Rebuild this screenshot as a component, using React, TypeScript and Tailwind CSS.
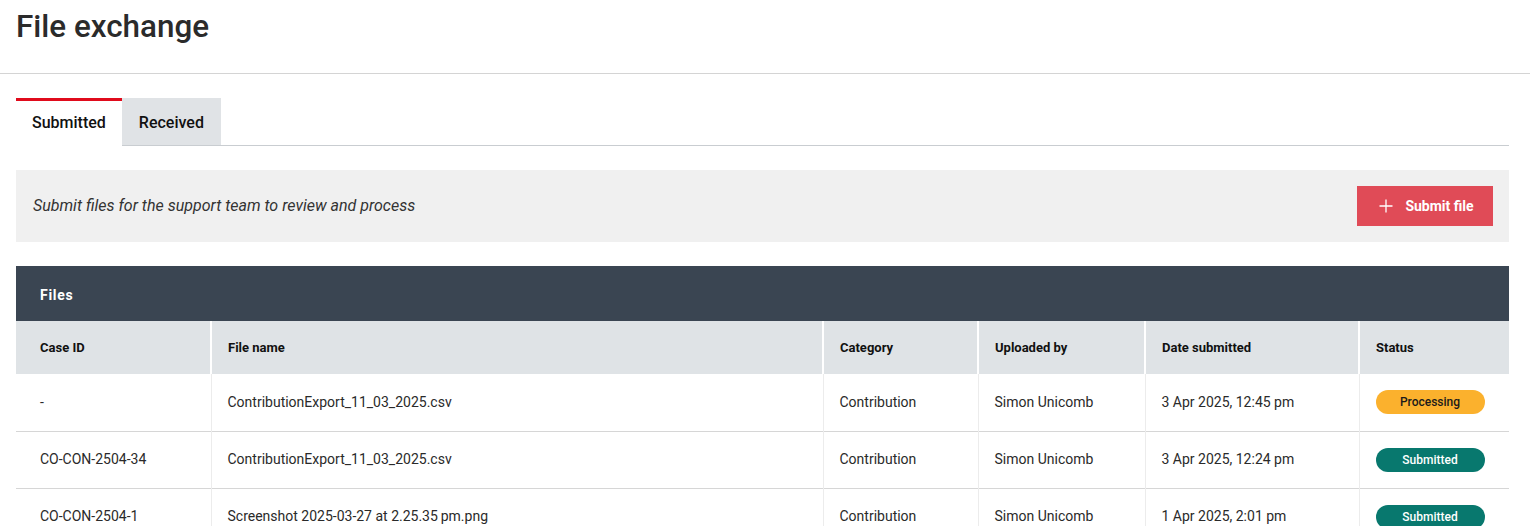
import React from "react";

type Row = {
  caseId: string;
  fileName: string;
  category: string;
  uploadedBy: string;
  date: string;
  status: "Processing" | "Submitted";
};

const ROWS: Row[] = [
  {
    caseId: "-",
    fileName: "ContributionExport_11_03_2025.csv",
    category: "Contribution",
    uploadedBy: "Simon Unicomb",
    date: "3 Apr 2025, 12:45 pm",
    status: "Processing",
  },
  {
    caseId: "CO-CON-2504-34",
    fileName: "ContributionExport_11_03_2025.csv",
    category: "Contribution",
    uploadedBy: "Simon Unicomb",
    date: "3 Apr 2025, 12:24 pm",
    status: "Submitted",
  },
  {
    caseId: "CO-CON-2504-1",
    fileName: "Screenshot 2025-03-27 at 2.25.35\u2009pm.png",
    category: "Contribution",
    uploadedBy: "Simon Unicomb",
    date: "1 Apr 2025, 2:01 pm",
    status: "Submitted",
  },
];

const COLUMNS = ["Case ID", "File name", "Category", "Uploaded by", "Date submitted", "Status"];

const StatusBadge = ({ status }: { status: Row["status"] }) =>
  status === "Processing" ? (
    <span className="inline-flex h-[24px] w-[109px] items-center justify-center rounded-full bg-[#fbb12d] text-[12px] font-medium text-[#1a1a1a]">
      Processing
    </span>
  ) : (
    <span className="inline-flex h-[24px] w-[109px] items-center justify-center rounded-full bg-[#08786e] text-[12px] font-medium text-white">
      Submitted
    </span>
  );

export default function App() {
  return (
    <div className="min-h-[526px] bg-white font-['Roboto',sans-serif] text-[#222]">
      <header className="h-[74px] border-b border-[#d4d4d4] px-4 pt-[7px]">
        <h1 className="text-[31.4px] font-medium leading-[40px] text-[#2b2b2b]">File exchange</h1>
      </header>

      <main className="pl-4 pr-[21px] pt-6">
        {/* tabs */}
        <div className="flex h-[48px] border-b border-[#c9cdd1]">
          <button className="h-[48px] border-t-[3px] border-[#e00b1c] bg-white px-4 pb-px text-[16px] font-medium text-[#111]">
            Submitted
          </button>
          <button className="h-[47px] bg-[#e0e3e6] px-[17px] pt-[2px] text-[16px] font-medium text-[#111]">
            Received
          </button>
        </div>

        <div className="mt-6 flex h-[72px] items-center justify-between bg-[#f0f0f0] pl-[17px] pr-4">
          <p className="text-[16px] italic text-[#333]">Submit files for the support team to review and process</p>
          <button className="flex h-[40px] w-[136px] items-center justify-center gap-[12px] bg-[#e04b57] pl-[3px] text-[14px] font-bold text-white">
            <svg width="14" height="14" viewBox="0 0 14 14" fill="none" stroke="currentColor" strokeWidth="1.3">
              <path d="M7 0.5v13M0.5 7h13" />
            </svg>
            Submit file
          </button>
        </div>

        <section className="mt-6">
          <div className="flex h-[55px] items-center bg-[#3a4552] px-6 pt-[3px]">
            <h2 className="text-[14px] font-bold tracking-[0.7px] text-white">Files</h2>
          </div>
          <table className="w-full table-fixed border-collapse text-left">
            <colgroup>
              <col className="w-[195px]" />
              <col className="w-[612px]" />
              <col className="w-[155px]" />
              <col className="w-[167px]" />
              <col className="w-[214px]" />
              <col />
            </colgroup>
            <thead>
              <tr className="h-[53px] bg-[#dfe3e6]">
                {COLUMNS.map((c, i) => (
                  <th
                    key={c}
                    className={
                      i === 0
                        ? "pl-6 text-[13px] font-bold text-[#111]"
                        : "border-l-2 border-white pl-4 text-[13px] font-bold text-[#111]"
                    }
                  >
                    {c}
                  </th>
                ))}
              </tr>
            </thead>
            <tbody>
              {ROWS.map((r) => (
                <tr key={r.caseId + r.date} className="h-[57px] border-b border-[#d6d6d6] text-[14px] text-[#2a2a2a]">
                  <td className="pl-6">{r.caseId}</td>
                  <td className="border-l border-[#ececec] pl-4">{r.fileName}</td>
                  <td className="border-l border-[#ececec] pl-4">{r.category}</td>
                  <td className="border-l border-[#ececec] pl-4">{r.uploadedBy}</td>
                  <td className="border-l border-[#ececec] pl-4">{r.date}</td>
                  <td className="border-l border-[#ececec] pl-4">
                    <StatusBadge status={r.status} />
                  </td>
                </tr>
              ))}
            </tbody>
          </table>
        </section>
      </main>
    </div>
  );
}
